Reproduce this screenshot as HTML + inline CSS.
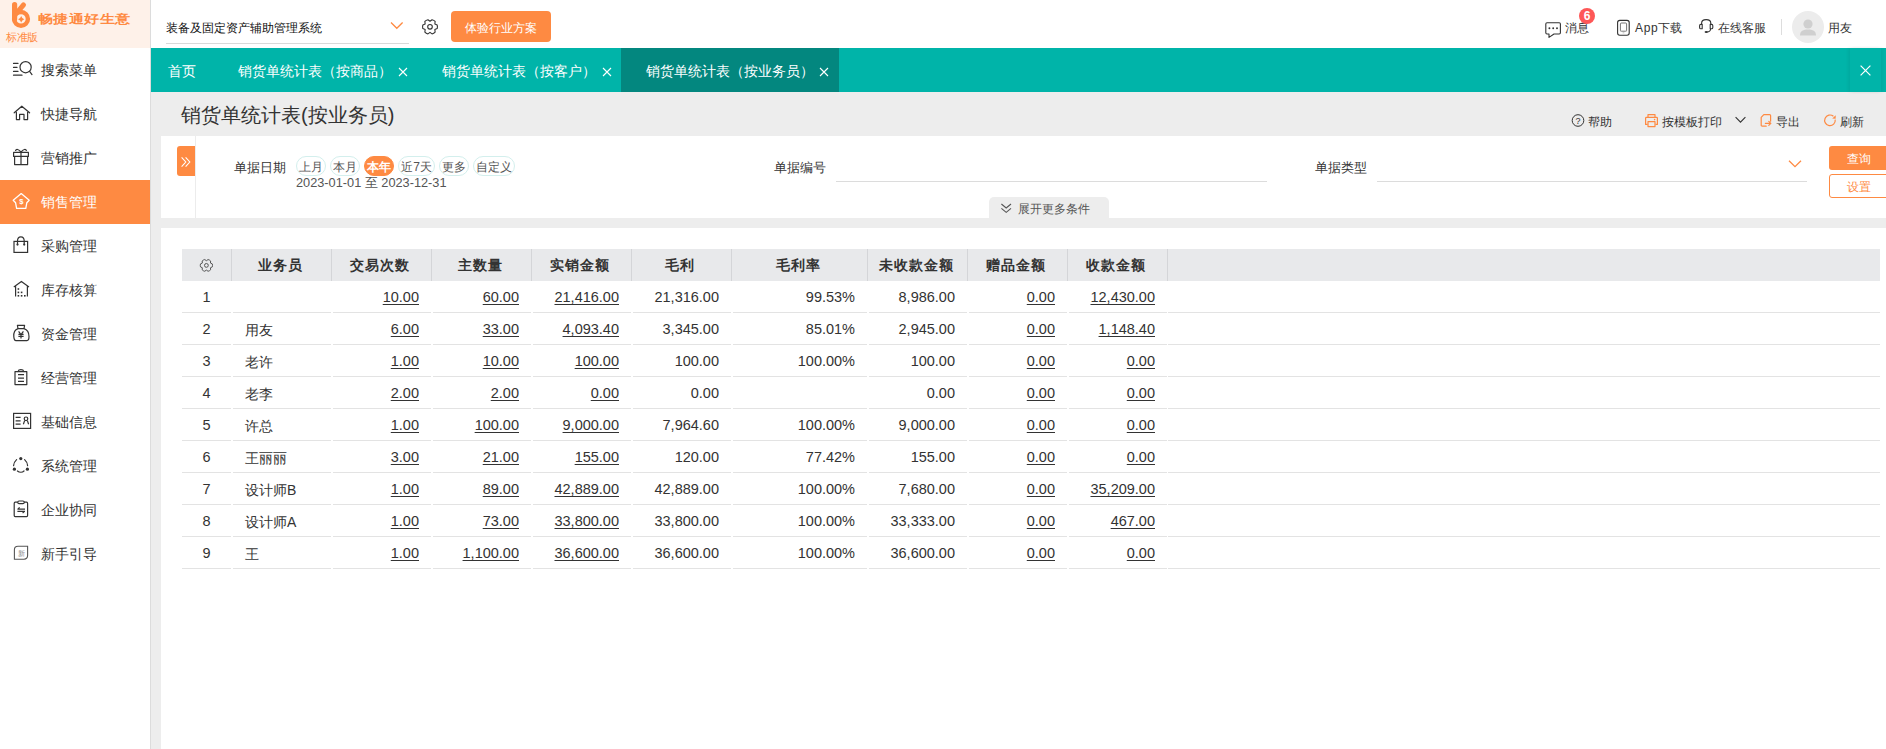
<!DOCTYPE html>
<html><head><meta charset="utf-8">
<style>
*{box-sizing:border-box;margin:0;padding:0}
html,body{width:1886px;height:749px;overflow:hidden;background:#ededed;font-family:"Liberation Sans",sans-serif;color:#333}
.abs{position:absolute}
#side{position:absolute;left:0;top:0;width:151px;height:749px;background:#fff;border-right:1px solid #dcdcdc}
#logo{position:absolute;left:0;top:0;width:150px;height:48px;background:#fef1e9}
.mi{position:absolute;left:0;width:150px;height:44px;font-size:14px;line-height:44px;color:#333}
.mi .t{position:absolute;left:41px;top:0}
.mi svg{position:absolute;left:0;top:0}
.mi.act{background:#fe8a42;color:#fff}
#top{position:absolute;left:151px;top:0;width:1735px;height:48px;background:#fff}
#tabs{position:absolute;left:151px;top:48px;width:1735px;height:44px;background:#00b4a9}
.tab{position:absolute;top:0;height:44px;line-height:47px;color:#fff;font-size:14px}
.tab.act{background:#03877f}
.tab .x{position:absolute;top:19px}
.tt{white-space:nowrap}
.f12{font-size:12px;line-height:18px;color:#333}
.f13{font-size:13px;line-height:20px;color:#333}
.chip{position:absolute;top:156px;height:20px;border:1px solid #d3efed;border-radius:10px;font-size:12px;line-height:21px;text-align:center;color:#555;white-space:nowrap}
.chip.on{background:#fe8a42;border-color:#fe8a42;color:#fff;font-weight:bold}
.hd{position:absolute;top:249px;height:32px;line-height:32px;text-align:center;font-size:14px;font-weight:bold;color:#333;white-space:nowrap;letter-spacing:1px;padding-right:2px}
.cl{position:absolute;height:32px;line-height:32px;font-size:14.5px;color:#333;white-space:nowrap}
.cl.c{text-align:center}
.cl.nm{font-size:14px}
.cl.u{text-decoration:underline;text-underline-offset:2px}
</style></head><body>
<div id="side">
  <div id="logo">
    <svg class="abs" style="left:0;top:0" width="40" height="30" viewBox="0 0 40 30">
      <line x1="14.6" y1="4.6" x2="14.6" y2="19" stroke="#fe8a42" stroke-width="5.2" stroke-linecap="round"/>
      <line x1="23.5" y1="4.8" x2="17.5" y2="12" stroke="#fe8a42" stroke-width="5" stroke-linecap="round"/>
      <circle cx="21" cy="18.9" r="6.9" fill="none" stroke="#fe8a42" stroke-width="4.4"/>
      <path d="M21.2 15.9 Q21.9 18.4 24.3 19.2 Q21.9 20 21.2 22.5 Q20.5 20 18.1 19.2 Q20.5 18.4 21.2 15.9Z" fill="#fe8a42"/>
    </svg>
    <div class="abs tt" style="left:38px;top:10px;font-size:12px;font-weight:bold;color:#fe8a42;letter-spacing:0.3px;line-height:18px;transform:scaleX(1.255);transform-origin:0 0">畅捷通好生意</div>
    <div class="abs tt" style="left:6px;top:30px;font-size:10.5px;color:#fe8a42;line-height:14px;letter-spacing:-0.3px">标准版</div>
  </div>
  <div class="mi" style="top:48px"><svg width="40" height="44" viewBox="0 48 40 44"><g fill="none" stroke="#333" stroke-width="1.2" stroke-linecap="round"><path d="M13.5 63.4H18M13.5 67.4H17M13.5 71.4H18M13.5 75.2H22"/><circle cx="25.6" cy="67.2" r="5.6"/><path d="M29.6 71.4L32 74.6"/></g></svg><span class="t">搜索菜单</span></div>
  <div class="mi" style="top:92px"><svg width="40" height="44" viewBox="0 92 40 44"><path d="M14.2 112.8L21.8 106.2L29.6 112.8M16.4 112.4V119.6H19.6V114.4H24V119.6H27.6V112.4" fill="none" stroke="#333" stroke-width="1.2" stroke-linejoin="round" stroke-linecap="round"/></svg><span class="t">快捷导航</span></div>
  <div class="mi" style="top:136px"><svg width="40" height="44" viewBox="0 136 40 44"><g fill="none" stroke="#333" stroke-width="1.2" stroke-linejoin="round"><rect x="13.6" y="152.4" width="14.8" height="4"/><path d="M14.6 156.4V164.6H27.6V156.4M21 152.4V164.6M21 152.4C19 149 15.6 148.6 15.6 151M21 152.4C23 149 26.4 148.6 26.4 151"/></g></svg><span class="t">营销推广</span></div>
  <div class="mi act" style="top:180px"><svg width="40" height="44" viewBox="0 180 40 44"><g fill="none" stroke="#fff" stroke-width="1.3" stroke-linejoin="round"><path d="M21.2 193.6L29.2 200.2L26.8 202.8L25.8 208.4H16.6L15.6 202.8L13.2 200.2Z"/></g><text x="21.3" y="204.4" font-size="7.6" font-weight="bold" fill="#fff" text-anchor="middle" font-family="Liberation Sans">$</text></svg><span class="t">销售管理</span></div>
  <div class="mi" style="top:224px"><svg width="40" height="44" viewBox="0 224 40 44"><g fill="none" stroke="#333" stroke-width="1.2"><rect x="14" y="241.4" width="13.6" height="11"/><path d="M17.5 244.2V241C17.5 235.5 24.2 235.5 24.2 241V244.2"/></g><circle cx="17.5" cy="244.6" r="1.1" fill="#333"/><circle cx="24.2" cy="244.6" r="1.1" fill="#333"/></svg><span class="t">采购管理</span></div>
  <div class="mi" style="top:268px"><svg width="40" height="44" viewBox="0 268 40 44"><g fill="none" stroke="#333" stroke-width="1.2"><path d="M13.8 287L21.4 281.6L29 287M15.6 286V296.6M27.4 286V296.6"/></g><g fill="#333"><rect x="17.6" y="288.2" width="1.6" height="1.6"/><rect x="17.6" y="291.6" width="1.6" height="1.6"/><rect x="20.8" y="291.6" width="1.6" height="1.6"/><rect x="17.6" y="295" width="1.6" height="1.6"/><rect x="20.8" y="295" width="1.6" height="1.6"/><rect x="24" y="295" width="1.6" height="1.6"/></g></svg><span class="t">库存核算</span></div>
  <div class="mi" style="top:312px"><svg width="40" height="44" viewBox="0 312 40 44"><g fill="none" stroke="#333" stroke-width="1.2" stroke-linejoin="round"><path d="M17.4 325.4H24.6L24 328.6H18Z"/><path d="M18 328.6C14 330 13.6 334 13.8 336.6C14 339 14.8 340.6 16 340.6H27C28.4 340.6 29 339 29 336.6C29 334 28.6 330 24 328.6"/><path d="M18.6 331.4L21 334.6L23.4 331.4M18.4 334.4H23.6M18.4 336.4H23.6M21 334.6V338.6"/></g></svg><span class="t">资金管理</span></div>
  <div class="mi" style="top:356px"><svg width="40" height="44" viewBox="0 356 40 44"><g fill="none" stroke="#333" stroke-width="1.2" stroke-linejoin="round"><path d="M18 371.6H15V384.6H26.8V371.6H23.8"/><path d="M18 371.6C18.6 369 23.2 369 23.8 371.6Z"/><path d="M18 374.6H24M18 378.1H24M18 381.4H24"/></g></svg><span class="t">经营管理</span></div>
  <div class="mi" style="top:400px"><svg width="40" height="44" viewBox="0 400 40 44"><g fill="none" stroke="#333" stroke-width="1.2"><rect x="13.6" y="413.4" width="17" height="15"/><path d="M15.6 417.4H20.6M15.6 420.8H20.6M15.6 424.2H20.6"/><circle cx="26" cy="418.8" r="1.8"/><path d="M23.4 424.2L24.6 420.6M28.6 424.2L27.4 420.6"/></g></svg><span class="t">基础信息</span></div>
  <div class="mi" style="top:444px"><svg width="40" height="44" viewBox="0 444 40 44"><g fill="none" stroke="#333" stroke-width="1.2" stroke-linecap="round"><path d="M16.6 459.6C15 461 13.8 463 13.6 465.6"/><path d="M24.6 459.6C26.2 461 27.4 463 27.6 465.6"/><path d="M17.4 471C19.4 472.6 22.4 472.6 24 471"/></g><g fill="#333"><circle cx="20.8" cy="458.6" r="1.6"/><circle cx="14.4" cy="469.2" r="1.6"/><circle cx="27.4" cy="469.2" r="1.6"/></g></svg><span class="t">系统管理</span></div>
  <div class="mi" style="top:488px"><svg width="40" height="44" viewBox="0 488 40 44"><g fill="none" stroke="#333" stroke-width="1.2" stroke-linejoin="round"><path d="M17.8 502.2H15.2C14.6 502.2 14.2 502.6 14.2 503.4V515.6C14.2 516.2 14.6 516.6 15.2 516.6H26.6C27.2 516.6 27.6 516.2 27.6 515.6V503.4C27.6 502.6 27.2 502.2 26.6 502.2H24"/><rect x="17.8" y="501" width="6.4" height="2.6" rx="1.2"/><path d="M17.4 509.2H25M17.4 511.4H25M17.8 509.2L19.6 507.4M24.6 511.4L22.6 513"/></g></svg><span class="t">企业协同</span></div>
  <div class="mi" style="top:532px"><svg width="40" height="44" viewBox="0 532 40 44"><g fill="none" stroke="#555" stroke-width="1.1"><path d="M18 546.2H27.6V555.6C27.6 557.6 26 559.2 24 559.2H14.4V549.8C14.4 547.8 16 546.2 18 546.2Z"/></g><text x="21" y="555.8" font-size="7" fill="#888" text-anchor="middle">新</text></svg><span class="t">新手引导</span></div>
</div>
<div id="top">
  <div class="abs tt" style="left:15px;top:20px;font-size:12px;line-height:16px;color:#111">装备及固定资产辅助管理系统</div>
  <div class="abs" style="left:15px;top:43px;width:243px;height:1px;background:#d9d9d9"></div>
  <svg class="abs" style="left:238px;top:20px" width="16" height="12" viewBox="0 0 16 12"><path d="M2 2.5L7.8 8.3L13.6 2.5" fill="none" stroke="#fe8a42" stroke-width="1.3"/></svg>
  <svg class="abs" style="left:270px;top:18px" width="18" height="18" viewBox="0 0 18 18"><g fill="none" stroke="#333" stroke-width="1.1" stroke-linejoin="round"><path d="M16.18 7.01Q16.70 8.80 16.18 10.59L13.85 11.60L14.14 14.12Q12.85 15.46 11.04 15.91L9.00 14.40L6.96 15.91Q5.15 15.46 3.86 14.12L4.15 11.60L1.82 10.59Q1.30 8.80 1.82 7.01L4.15 6.00L3.86 3.48Q5.15 2.14 6.96 1.69L9.00 3.20L11.04 1.69Q12.85 2.14 14.14 3.48L13.85 6.00Z"/><circle cx="9" cy="8.8" r="2.3"/></g></svg>
  <div class="abs tt" style="left:300px;top:11px;width:100px;height:31px;border-radius:4px;background:#fe8a42;color:#fff;font-size:12px;line-height:34px;text-align:center">体验行业方案</div>

  <svg class="abs" style="left:1389px;top:0" width="60" height="48" viewBox="1540 0 60 48"><g fill="none" stroke="#333" stroke-width="1.1" stroke-linejoin="round"><path d="M1547 22.8H1559.2C1560 22.8 1560.4 23.2 1560.4 24V32.8C1560.4 33.6 1560 34 1559.2 34H1554L1549 37.4V34H1547C1546.2 34 1545.8 33.6 1545.8 32.8V24C1545.8 23.2 1546.2 22.8 1547 22.8Z"/></g><g fill="#333"><circle cx="1549.4" cy="28.3" r="0.95"/><circle cx="1553.2" cy="28.3" r="0.95"/><circle cx="1557" cy="28.3" r="0.95"/></g></svg>
  <div class="abs tt" style="left:1414px;top:20px;font-size:12px;line-height:16px;color:#333">消息</div>
  <div class="abs" style="left:1428px;top:8px;width:16px;height:16px;border-radius:50%;background:#fe5757;color:#fff;font-size:12px;font-weight:bold;line-height:16px;text-align:center">6</div>
  <svg class="abs" style="left:1459px;top:0" width="30" height="48" viewBox="1610 0 30 48"><rect x="1617.6" y="20.4" width="11.6" height="14.8" rx="2.2" fill="none" stroke="#333" stroke-width="1.1"/><rect x="1620.4" y="23" width="6.2" height="8.4" rx="1" fill="none" stroke="#777" stroke-width="1"/><path d="M1621 23.4H1626M1621 31H1626" stroke="#bbb" stroke-width="1.2"/><rect x="1622.6" y="32.2" width="1.8" height="1.2" fill="#ccc"/></svg>
  <div class="abs tt" style="left:1484px;top:20px;font-size:12px;line-height:16px;color:#333"><span style="letter-spacing:0.7px">App</span>下载</div>
  <svg class="abs" style="left:1541px;top:0" width="30" height="48" viewBox="1692 0 30 48"><g fill="none" stroke="#333" stroke-width="1.1" stroke-linejoin="round" stroke-linecap="round"><path d="M1701.6 24.4V23.2C1701.6 20.8 1703.4 19.6 1706.2 19.6C1709 19.6 1710.8 20.8 1710.8 23.2V24.4"/><path d="M1702.2 24.4H1700.8C1700 24.4 1699.6 25 1699.6 25.8V27.4C1699.6 28.2 1700 28.8 1700.8 28.8H1702.2Z"/><path d="M1710.2 24.4H1711.6C1712.4 24.4 1712.8 25 1712.8 25.8V27.4C1712.8 28.2 1712.4 28.8 1711.6 28.8H1710.2Z"/><path d="M1710.6 29C1710.4 31 1709 32 1707 32"/></g><ellipse cx="1706.2" cy="32" rx="1.6" ry="1.1" fill="#333"/></svg>
  <div class="abs tt" style="left:1567px;top:20px;font-size:12px;line-height:16px;color:#333">在线客服</div>
  <div class="abs" style="left:1630px;top:19px;width:1px;height:16px;background:#ddd"></div>
  <div class="abs" style="left:1641px;top:11px;width:32px;height:32px;border-radius:50%;background:#ececec;overflow:hidden">
    <svg width="32" height="32" viewBox="0 0 32 32"><circle cx="16" cy="13" r="4.6" fill="#cfcfcf"/><path d="M8 24.6C8 19.6 11.4 18.4 16 18.4C20.6 18.4 24 19.6 24 24.6Z" fill="#cfcfcf"/></svg>
  </div>
  <div class="abs tt" style="left:1677px;top:20px;font-size:12px;line-height:16px;color:#333">用友</div>
</div>
<div id="tabs">
  <div class="tab" style="left:0;width:62px;text-align:center">首页</div>
  <div class="tab" style="left:62px;width:204px"><span class="abs tt" style="left:25px">销货单统计表（按商品）</span><svg class="x" style="left:185px" width="10" height="10" viewBox="0 0 10 10"><path d="M1 1L9 9M9 1L1 9" stroke="#fff" stroke-width="1.1"/></svg></div>
  <div class="tab" style="left:266px;width:204px"><span class="abs tt" style="left:25px">销货单统计表（按客户）</span><svg class="x" style="left:185px" width="10" height="10" viewBox="0 0 10 10"><path d="M1 1L9 9M9 1L1 9" stroke="#fff" stroke-width="1.1"/></svg></div>
  <div class="tab act" style="left:470px;width:218px"><span class="abs tt" style="left:25px">销货单统计表（按业务员）</span><svg class="x" style="left:198px" width="10" height="10" viewBox="0 0 10 10"><path d="M1 1L9 9M9 1L1 9" stroke="#fff" stroke-width="1.1"/></svg></div>
  <div class="abs" style="left:1699px;top:0;width:31px;height:44px;box-shadow:-2px 0 3px rgba(0,0,0,0.06),2px 0 3px rgba(0,0,0,0.06)"><svg class="abs" style="left:10px;top:17px" width="11" height="11" viewBox="0 0 11 11"><path d="M0.6 0.6L10.4 10.4M10.4 0.6L0.6 10.4" stroke="#fff" stroke-width="1.2"/></svg></div>
</div>
<div id="content">
  <div class="abs tt" style="left:181px;top:101px;font-size:20px;line-height:28px;color:#333">销货单统计表(按业务员)</div>
  <svg class="abs" style="left:1571px;top:114px" width="14" height="14" viewBox="0 0 14 14"><circle cx="7" cy="6.5" r="5.8" fill="none" stroke="#333" stroke-width="1"/><text x="7" y="9.8" font-size="9" fill="#333" text-anchor="middle" font-family="Liberation Sans">?</text></svg>
  <div class="abs tt f12" style="left:1588px;top:113px">帮助</div>
  <svg class="abs" style="left:1644px;top:113px" width="15" height="15" viewBox="0 0 15 15"><g fill="none" stroke="#fe8a42" stroke-width="1.2" stroke-linejoin="round"><path d="M4 4.4V1.6H11V4.4"/><path d="M3.6 11.4H1.6V5.2C1.6 4.7 2 4.4 2.5 4.4H12.5C13 4.4 13.4 4.7 13.4 5.2V11.4H11.4"/><rect x="4" y="8.6" width="7" height="5"/></g><circle cx="10.6" cy="6.6" r="0.8" fill="#fe8a42"/></svg>
  <div class="abs tt f12" style="left:1662px;top:113px">按模板打印</div>
  <svg class="abs" style="left:1734px;top:115px" width="13" height="10" viewBox="0 0 13 10"><path d="M1.6 2.2L6.5 7.2L11.4 2.2" fill="none" stroke="#333" stroke-width="1.1"/></svg>
  <svg class="abs" style="left:1759px;top:113px" width="14" height="15" viewBox="0 0 14 15"><g fill="none" stroke="#fe8a42" stroke-width="1.2" stroke-linejoin="round" stroke-linecap="round"><path d="M7.2 13.2H3.2C2.6 13.2 2.2 12.8 2.2 12.2V4.4L4.8 1.6H10.6C11.2 1.6 11.6 2 11.6 2.6V8.2"/><path d="M6.4 10.4H11.8M9.8 8.4L11.8 10.4L9.8 12.4"/></g></svg>
  <div class="abs tt f12" style="left:1776px;top:113px">导出</div>
  <svg class="abs" style="left:1822px;top:112px" width="16" height="16" viewBox="1822 112 16 16"><path d="M1835.2 119.6A5.3 5.3 0 1 1 1833.4 116.3" fill="none" stroke="#fe8a42" stroke-width="1.2"/><path d="M1835.8 115.2L1835.6 118.8L1832.2 118.4Z" fill="#fe8a42"/></svg>
  <div class="abs tt f12" style="left:1840px;top:113px">刷新</div>

  <div class="abs" style="left:161px;top:136px;width:1725px;height:82px;background:#fff"></div>
  <div class="abs" style="left:195px;top:136px;width:1px;height:82px;background:#ececec"></div>
  <div class="abs" style="left:177px;top:146px;width:18px;height:30px;background:#fe8a42;border-radius:3px 0 0 3px"><svg class="abs" style="left:2px;top:9px" width="14" height="14" viewBox="0 0 14 14"><path d="M2.6 2.4L6.8 7L2.6 11.6M6.6 2.4L10.8 7L6.6 11.6" fill="none" stroke="#fff" stroke-width="1.1"/></svg></div>
  <div class="abs tt f13" style="left:234px;top:158px">单据日期</div>
  <div class="chip" style="left:296px;width:30px">上月</div>
  <div class="chip" style="left:330px;width:30px">本月</div>
  <div class="chip on" style="left:364px;width:30px">本年</div>
  <div class="chip" style="left:398px;width:37px">近7天</div>
  <div class="chip" style="left:439px;width:30px">更多</div>
  <div class="chip" style="left:473px;width:42px">自定义</div>
  <div class="abs tt" style="left:296px;top:175px;font-size:12.75px;line-height:15px;color:#555">2023-01-01 至 2023-12-31</div>
  <div class="abs tt f13" style="left:774px;top:158px">单据编号</div>
  <div class="abs" style="left:836px;top:181px;width:431px;height:1px;background:#dcdcdc"></div>
  <div class="abs tt f13" style="left:1315px;top:158px">单据类型</div>
  <div class="abs" style="left:1377px;top:181px;width:430px;height:1px;background:#dcdcdc"></div>
  <svg class="abs" style="left:1787px;top:158px" width="16" height="12" viewBox="0 0 16 12"><path d="M2 2.8L8 8.6L14 2.8" fill="none" stroke="#fe8a42" stroke-width="1.3"/></svg>
  <div class="abs tt" style="left:1829px;top:146px;width:60px;height:24px;background:#fe8a42;border-radius:3px;color:#fff;font-size:12px;line-height:27px;text-align:center">查询</div>
  <div class="abs tt" style="left:1829px;top:174px;width:60px;height:24px;border:1px solid #fe8a42;border-radius:3px;color:#fe8a42;font-size:12px;line-height:25px;text-align:center;background:#fff">设置</div>
  <div class="abs" style="left:989px;top:197px;width:120px;height:21px;background:#ededed;border-radius:5px 5px 0 0">
    <svg class="abs" style="left:11px;top:6px" width="13" height="11" viewBox="0 0 13 11"><path d="M1.4 1L6.2 5L11 1M1.4 5.4L6.2 9.4L11 5.4" fill="none" stroke="#555" stroke-width="1.1"/></svg>
    <div class="abs tt" style="left:29px;top:5px;font-size:12px;line-height:15px;color:#555">展开更多条件</div>
  </div>

  <div class="abs" style="left:161px;top:228px;width:1725px;height:521px;background:#fff"></div>
</div>
<div id="grid">
<div class="abs" style="left:182px;top:312px;width:49px;height:1px;background:#e3e3e3"></div>
<div class="abs" style="left:233px;top:312px;width:98px;height:1px;background:#e3e3e3"></div>
<div class="abs" style="left:333px;top:312px;width:98px;height:1px;background:#e3e3e3"></div>
<div class="abs" style="left:433px;top:312px;width:98px;height:1px;background:#e3e3e3"></div>
<div class="abs" style="left:533px;top:312px;width:98px;height:1px;background:#e3e3e3"></div>
<div class="abs" style="left:633px;top:312px;width:98px;height:1px;background:#e3e3e3"></div>
<div class="abs" style="left:733px;top:312px;width:134px;height:1px;background:#e3e3e3"></div>
<div class="abs" style="left:869px;top:312px;width:98px;height:1px;background:#e3e3e3"></div>
<div class="abs" style="left:969px;top:312px;width:98px;height:1px;background:#e3e3e3"></div>
<div class="abs" style="left:1069px;top:312px;width:98px;height:1px;background:#e3e3e3"></div>
<div class="abs" style="left:1168px;top:312px;width:712px;height:1px;background:#e3e3e3"></div>
<div class="abs" style="left:182px;top:344px;width:49px;height:1px;background:#e3e3e3"></div>
<div class="abs" style="left:233px;top:344px;width:98px;height:1px;background:#e3e3e3"></div>
<div class="abs" style="left:333px;top:344px;width:98px;height:1px;background:#e3e3e3"></div>
<div class="abs" style="left:433px;top:344px;width:98px;height:1px;background:#e3e3e3"></div>
<div class="abs" style="left:533px;top:344px;width:98px;height:1px;background:#e3e3e3"></div>
<div class="abs" style="left:633px;top:344px;width:98px;height:1px;background:#e3e3e3"></div>
<div class="abs" style="left:733px;top:344px;width:134px;height:1px;background:#e3e3e3"></div>
<div class="abs" style="left:869px;top:344px;width:98px;height:1px;background:#e3e3e3"></div>
<div class="abs" style="left:969px;top:344px;width:98px;height:1px;background:#e3e3e3"></div>
<div class="abs" style="left:1069px;top:344px;width:98px;height:1px;background:#e3e3e3"></div>
<div class="abs" style="left:1168px;top:344px;width:712px;height:1px;background:#e3e3e3"></div>
<div class="abs" style="left:182px;top:376px;width:49px;height:1px;background:#e3e3e3"></div>
<div class="abs" style="left:233px;top:376px;width:98px;height:1px;background:#e3e3e3"></div>
<div class="abs" style="left:333px;top:376px;width:98px;height:1px;background:#e3e3e3"></div>
<div class="abs" style="left:433px;top:376px;width:98px;height:1px;background:#e3e3e3"></div>
<div class="abs" style="left:533px;top:376px;width:98px;height:1px;background:#e3e3e3"></div>
<div class="abs" style="left:633px;top:376px;width:98px;height:1px;background:#e3e3e3"></div>
<div class="abs" style="left:733px;top:376px;width:134px;height:1px;background:#e3e3e3"></div>
<div class="abs" style="left:869px;top:376px;width:98px;height:1px;background:#e3e3e3"></div>
<div class="abs" style="left:969px;top:376px;width:98px;height:1px;background:#e3e3e3"></div>
<div class="abs" style="left:1069px;top:376px;width:98px;height:1px;background:#e3e3e3"></div>
<div class="abs" style="left:1168px;top:376px;width:712px;height:1px;background:#e3e3e3"></div>
<div class="abs" style="left:182px;top:408px;width:49px;height:1px;background:#e3e3e3"></div>
<div class="abs" style="left:233px;top:408px;width:98px;height:1px;background:#e3e3e3"></div>
<div class="abs" style="left:333px;top:408px;width:98px;height:1px;background:#e3e3e3"></div>
<div class="abs" style="left:433px;top:408px;width:98px;height:1px;background:#e3e3e3"></div>
<div class="abs" style="left:533px;top:408px;width:98px;height:1px;background:#e3e3e3"></div>
<div class="abs" style="left:633px;top:408px;width:98px;height:1px;background:#e3e3e3"></div>
<div class="abs" style="left:733px;top:408px;width:134px;height:1px;background:#e3e3e3"></div>
<div class="abs" style="left:869px;top:408px;width:98px;height:1px;background:#e3e3e3"></div>
<div class="abs" style="left:969px;top:408px;width:98px;height:1px;background:#e3e3e3"></div>
<div class="abs" style="left:1069px;top:408px;width:98px;height:1px;background:#e3e3e3"></div>
<div class="abs" style="left:1168px;top:408px;width:712px;height:1px;background:#e3e3e3"></div>
<div class="abs" style="left:182px;top:440px;width:49px;height:1px;background:#e3e3e3"></div>
<div class="abs" style="left:233px;top:440px;width:98px;height:1px;background:#e3e3e3"></div>
<div class="abs" style="left:333px;top:440px;width:98px;height:1px;background:#e3e3e3"></div>
<div class="abs" style="left:433px;top:440px;width:98px;height:1px;background:#e3e3e3"></div>
<div class="abs" style="left:533px;top:440px;width:98px;height:1px;background:#e3e3e3"></div>
<div class="abs" style="left:633px;top:440px;width:98px;height:1px;background:#e3e3e3"></div>
<div class="abs" style="left:733px;top:440px;width:134px;height:1px;background:#e3e3e3"></div>
<div class="abs" style="left:869px;top:440px;width:98px;height:1px;background:#e3e3e3"></div>
<div class="abs" style="left:969px;top:440px;width:98px;height:1px;background:#e3e3e3"></div>
<div class="abs" style="left:1069px;top:440px;width:98px;height:1px;background:#e3e3e3"></div>
<div class="abs" style="left:1168px;top:440px;width:712px;height:1px;background:#e3e3e3"></div>
<div class="abs" style="left:182px;top:472px;width:49px;height:1px;background:#e3e3e3"></div>
<div class="abs" style="left:233px;top:472px;width:98px;height:1px;background:#e3e3e3"></div>
<div class="abs" style="left:333px;top:472px;width:98px;height:1px;background:#e3e3e3"></div>
<div class="abs" style="left:433px;top:472px;width:98px;height:1px;background:#e3e3e3"></div>
<div class="abs" style="left:533px;top:472px;width:98px;height:1px;background:#e3e3e3"></div>
<div class="abs" style="left:633px;top:472px;width:98px;height:1px;background:#e3e3e3"></div>
<div class="abs" style="left:733px;top:472px;width:134px;height:1px;background:#e3e3e3"></div>
<div class="abs" style="left:869px;top:472px;width:98px;height:1px;background:#e3e3e3"></div>
<div class="abs" style="left:969px;top:472px;width:98px;height:1px;background:#e3e3e3"></div>
<div class="abs" style="left:1069px;top:472px;width:98px;height:1px;background:#e3e3e3"></div>
<div class="abs" style="left:1168px;top:472px;width:712px;height:1px;background:#e3e3e3"></div>
<div class="abs" style="left:182px;top:504px;width:49px;height:1px;background:#e3e3e3"></div>
<div class="abs" style="left:233px;top:504px;width:98px;height:1px;background:#e3e3e3"></div>
<div class="abs" style="left:333px;top:504px;width:98px;height:1px;background:#e3e3e3"></div>
<div class="abs" style="left:433px;top:504px;width:98px;height:1px;background:#e3e3e3"></div>
<div class="abs" style="left:533px;top:504px;width:98px;height:1px;background:#e3e3e3"></div>
<div class="abs" style="left:633px;top:504px;width:98px;height:1px;background:#e3e3e3"></div>
<div class="abs" style="left:733px;top:504px;width:134px;height:1px;background:#e3e3e3"></div>
<div class="abs" style="left:869px;top:504px;width:98px;height:1px;background:#e3e3e3"></div>
<div class="abs" style="left:969px;top:504px;width:98px;height:1px;background:#e3e3e3"></div>
<div class="abs" style="left:1069px;top:504px;width:98px;height:1px;background:#e3e3e3"></div>
<div class="abs" style="left:1168px;top:504px;width:712px;height:1px;background:#e3e3e3"></div>
<div class="abs" style="left:182px;top:536px;width:49px;height:1px;background:#e3e3e3"></div>
<div class="abs" style="left:233px;top:536px;width:98px;height:1px;background:#e3e3e3"></div>
<div class="abs" style="left:333px;top:536px;width:98px;height:1px;background:#e3e3e3"></div>
<div class="abs" style="left:433px;top:536px;width:98px;height:1px;background:#e3e3e3"></div>
<div class="abs" style="left:533px;top:536px;width:98px;height:1px;background:#e3e3e3"></div>
<div class="abs" style="left:633px;top:536px;width:98px;height:1px;background:#e3e3e3"></div>
<div class="abs" style="left:733px;top:536px;width:134px;height:1px;background:#e3e3e3"></div>
<div class="abs" style="left:869px;top:536px;width:98px;height:1px;background:#e3e3e3"></div>
<div class="abs" style="left:969px;top:536px;width:98px;height:1px;background:#e3e3e3"></div>
<div class="abs" style="left:1069px;top:536px;width:98px;height:1px;background:#e3e3e3"></div>
<div class="abs" style="left:1168px;top:536px;width:712px;height:1px;background:#e3e3e3"></div>
<div class="abs" style="left:182px;top:568px;width:49px;height:1px;background:#e3e3e3"></div>
<div class="abs" style="left:233px;top:568px;width:98px;height:1px;background:#e3e3e3"></div>
<div class="abs" style="left:333px;top:568px;width:98px;height:1px;background:#e3e3e3"></div>
<div class="abs" style="left:433px;top:568px;width:98px;height:1px;background:#e3e3e3"></div>
<div class="abs" style="left:533px;top:568px;width:98px;height:1px;background:#e3e3e3"></div>
<div class="abs" style="left:633px;top:568px;width:98px;height:1px;background:#e3e3e3"></div>
<div class="abs" style="left:733px;top:568px;width:134px;height:1px;background:#e3e3e3"></div>
<div class="abs" style="left:869px;top:568px;width:98px;height:1px;background:#e3e3e3"></div>
<div class="abs" style="left:969px;top:568px;width:98px;height:1px;background:#e3e3e3"></div>
<div class="abs" style="left:1069px;top:568px;width:98px;height:1px;background:#e3e3e3"></div>
<div class="abs" style="left:1168px;top:568px;width:712px;height:1px;background:#e3e3e3"></div>
<div class="abs" style="left:182px;top:249px;width:1698px;height:32px;background:#e8e9eb"></div>
<div class="abs" style="left:231px;top:249px;width:1px;height:32px;background:#d4d5d8"></div>
<div class="abs" style="left:331px;top:249px;width:1px;height:32px;background:#d4d5d8"></div>
<div class="abs" style="left:431px;top:249px;width:1px;height:32px;background:#d4d5d8"></div>
<div class="abs" style="left:531px;top:249px;width:1px;height:32px;background:#d4d5d8"></div>
<div class="abs" style="left:631px;top:249px;width:1px;height:32px;background:#d4d5d8"></div>
<div class="abs" style="left:731px;top:249px;width:1px;height:32px;background:#d4d5d8"></div>
<div class="abs" style="left:867px;top:249px;width:1px;height:32px;background:#d4d5d8"></div>
<div class="abs" style="left:967px;top:249px;width:1px;height:32px;background:#d4d5d8"></div>
<div class="abs" style="left:1067px;top:249px;width:1px;height:32px;background:#d4d5d8"></div>
<div class="abs" style="left:1167px;top:249px;width:1px;height:32px;background:#d4d5d8"></div>
<svg class="abs" style="left:199px;top:258px" width="14" height="14" viewBox="0 0 14 14"><g fill="none" stroke="#555" stroke-width="1" stroke-linejoin="round"><path d="M13.32 5.92Q13.74 7.40 13.32 8.88L11.47 9.75L11.64 11.79Q10.57 12.89 9.08 13.26L7.40 12.10L5.72 13.26Q4.23 12.89 3.16 11.79L3.33 9.75L1.48 8.88Q1.06 7.40 1.48 5.92L3.33 5.05L3.16 3.01Q4.23 1.91 5.72 1.54L7.40 2.70L9.08 1.54Q10.57 1.91 11.64 3.01L11.47 5.05Z"/><circle cx="7.4" cy="7.4" r="1.9"/></g></svg>
<div class="hd" style="left:231px;width:100px">业务员</div>
<div class="hd" style="left:331px;width:100px">交易次数</div>
<div class="hd" style="left:431px;width:100px">主数量</div>
<div class="hd" style="left:531px;width:100px">实销金额</div>
<div class="hd" style="left:631px;width:100px">毛利</div>
<div class="hd" style="left:731px;width:136px">毛利率</div>
<div class="hd" style="left:867px;width:100px">未收款金额</div>
<div class="hd" style="left:967px;width:100px">赠品金额</div>
<div class="hd" style="left:1067px;width:100px">收款金额</div>
<div class="cl c" style="left:182px;top:281px;width:49px">1</div>
<div class="cl r u" style="right:1467px;top:281px">10.00</div>
<div class="cl r u" style="right:1367px;top:281px">60.00</div>
<div class="cl r u" style="right:1267px;top:281px">21,416.00</div>
<div class="cl r" style="right:1167px;top:281px">21,316.00</div>
<div class="cl r" style="right:1031px;top:281px">99.53%</div>
<div class="cl r" style="right:931px;top:281px">8,986.00</div>
<div class="cl r u" style="right:831px;top:281px">0.00</div>
<div class="cl r u" style="right:731px;top:281px">12,430.00</div>
<div class="cl c" style="left:182px;top:313px;width:49px">2</div>
<div class="cl nm" style="left:245px;top:314px">用友</div>
<div class="cl r u" style="right:1467px;top:313px">6.00</div>
<div class="cl r u" style="right:1367px;top:313px">33.00</div>
<div class="cl r u" style="right:1267px;top:313px">4,093.40</div>
<div class="cl r" style="right:1167px;top:313px">3,345.00</div>
<div class="cl r" style="right:1031px;top:313px">85.01%</div>
<div class="cl r" style="right:931px;top:313px">2,945.00</div>
<div class="cl r u" style="right:831px;top:313px">0.00</div>
<div class="cl r u" style="right:731px;top:313px">1,148.40</div>
<div class="cl c" style="left:182px;top:345px;width:49px">3</div>
<div class="cl nm" style="left:245px;top:346px">老许</div>
<div class="cl r u" style="right:1467px;top:345px">1.00</div>
<div class="cl r u" style="right:1367px;top:345px">10.00</div>
<div class="cl r u" style="right:1267px;top:345px">100.00</div>
<div class="cl r" style="right:1167px;top:345px">100.00</div>
<div class="cl r" style="right:1031px;top:345px">100.00%</div>
<div class="cl r" style="right:931px;top:345px">100.00</div>
<div class="cl r u" style="right:831px;top:345px">0.00</div>
<div class="cl r u" style="right:731px;top:345px">0.00</div>
<div class="cl c" style="left:182px;top:377px;width:49px">4</div>
<div class="cl nm" style="left:245px;top:378px">老李</div>
<div class="cl r u" style="right:1467px;top:377px">2.00</div>
<div class="cl r u" style="right:1367px;top:377px">2.00</div>
<div class="cl r u" style="right:1267px;top:377px">0.00</div>
<div class="cl r" style="right:1167px;top:377px">0.00</div>
<div class="cl r" style="right:931px;top:377px">0.00</div>
<div class="cl r u" style="right:831px;top:377px">0.00</div>
<div class="cl r u" style="right:731px;top:377px">0.00</div>
<div class="cl c" style="left:182px;top:409px;width:49px">5</div>
<div class="cl nm" style="left:245px;top:410px">许总</div>
<div class="cl r u" style="right:1467px;top:409px">1.00</div>
<div class="cl r u" style="right:1367px;top:409px">100.00</div>
<div class="cl r u" style="right:1267px;top:409px">9,000.00</div>
<div class="cl r" style="right:1167px;top:409px">7,964.60</div>
<div class="cl r" style="right:1031px;top:409px">100.00%</div>
<div class="cl r" style="right:931px;top:409px">9,000.00</div>
<div class="cl r u" style="right:831px;top:409px">0.00</div>
<div class="cl r u" style="right:731px;top:409px">0.00</div>
<div class="cl c" style="left:182px;top:441px;width:49px">6</div>
<div class="cl nm" style="left:245px;top:442px">王丽丽</div>
<div class="cl r u" style="right:1467px;top:441px">3.00</div>
<div class="cl r u" style="right:1367px;top:441px">21.00</div>
<div class="cl r u" style="right:1267px;top:441px">155.00</div>
<div class="cl r" style="right:1167px;top:441px">120.00</div>
<div class="cl r" style="right:1031px;top:441px">77.42%</div>
<div class="cl r" style="right:931px;top:441px">155.00</div>
<div class="cl r u" style="right:831px;top:441px">0.00</div>
<div class="cl r u" style="right:731px;top:441px">0.00</div>
<div class="cl c" style="left:182px;top:473px;width:49px">7</div>
<div class="cl nm" style="left:245px;top:474px">设计师B</div>
<div class="cl r u" style="right:1467px;top:473px">1.00</div>
<div class="cl r u" style="right:1367px;top:473px">89.00</div>
<div class="cl r u" style="right:1267px;top:473px">42,889.00</div>
<div class="cl r" style="right:1167px;top:473px">42,889.00</div>
<div class="cl r" style="right:1031px;top:473px">100.00%</div>
<div class="cl r" style="right:931px;top:473px">7,680.00</div>
<div class="cl r u" style="right:831px;top:473px">0.00</div>
<div class="cl r u" style="right:731px;top:473px">35,209.00</div>
<div class="cl c" style="left:182px;top:505px;width:49px">8</div>
<div class="cl nm" style="left:245px;top:506px">设计师A</div>
<div class="cl r u" style="right:1467px;top:505px">1.00</div>
<div class="cl r u" style="right:1367px;top:505px">73.00</div>
<div class="cl r u" style="right:1267px;top:505px">33,800.00</div>
<div class="cl r" style="right:1167px;top:505px">33,800.00</div>
<div class="cl r" style="right:1031px;top:505px">100.00%</div>
<div class="cl r" style="right:931px;top:505px">33,333.00</div>
<div class="cl r u" style="right:831px;top:505px">0.00</div>
<div class="cl r u" style="right:731px;top:505px">467.00</div>
<div class="cl c" style="left:182px;top:537px;width:49px">9</div>
<div class="cl nm" style="left:245px;top:538px">王</div>
<div class="cl r u" style="right:1467px;top:537px">1.00</div>
<div class="cl r u" style="right:1367px;top:537px">1,100.00</div>
<div class="cl r u" style="right:1267px;top:537px">36,600.00</div>
<div class="cl r" style="right:1167px;top:537px">36,600.00</div>
<div class="cl r" style="right:1031px;top:537px">100.00%</div>
<div class="cl r" style="right:931px;top:537px">36,600.00</div>
<div class="cl r u" style="right:831px;top:537px">0.00</div>
<div class="cl r u" style="right:731px;top:537px">0.00</div>
</div>
</body></html>
